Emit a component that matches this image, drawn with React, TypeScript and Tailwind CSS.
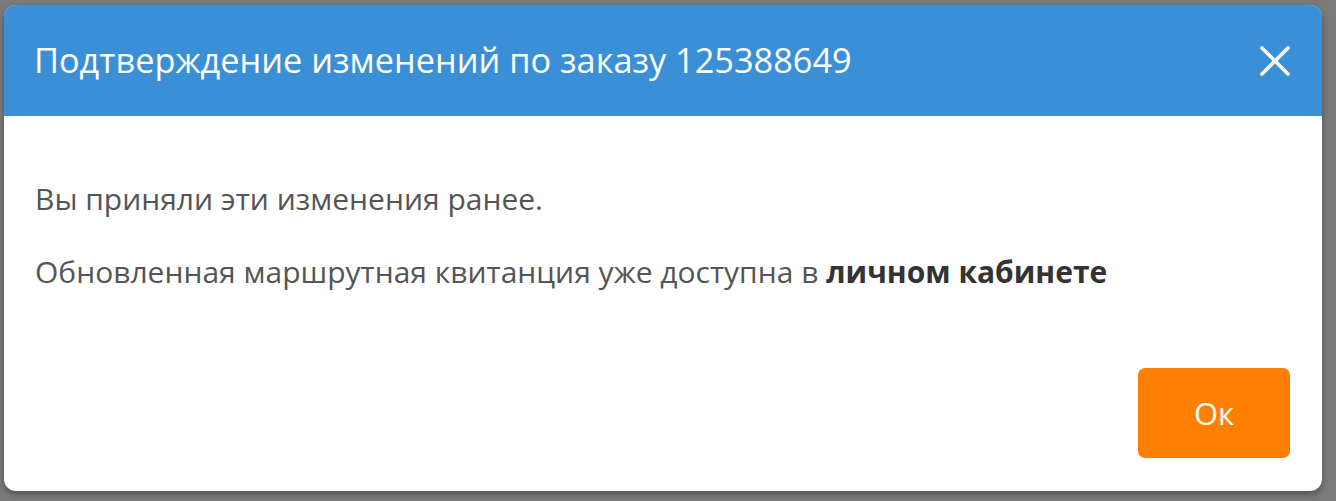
export default function App() {
  return (
    <div className="h-[501px] w-[1336px] overflow-hidden bg-[#7a7a7a] pl-[4px] pt-[5px]" style={{ fontFamily: '"Open Sans", "Noto Sans", sans-serif' }}>
      <div className="flex h-[486px] w-[1318px] flex-col overflow-hidden rounded-[12px] bg-white shadow-[0_3px_6px_rgba(0,0,0,0.35)]">
        <div className="flex h-[111px] shrink-0 items-center justify-between bg-[#3a8fd6] pl-[30px] pr-[31px]">
          <h1 className="text-[34.3px] leading-none text-white">Подтверждение изменений по заказу 125388649</h1>
          <button className="flex h-[32px] w-[32px] items-center justify-center text-white">
            <svg width="32" height="32" viewBox="0 0 32 32" fill="none" stroke="currentColor" strokeWidth="3.6" strokeLinecap="round">
              <path d="M3 3 L29 29 M29 3 L3 29" />
            </svg>
          </button>
        </div>
        <div className="flex-1 px-[31px] pt-[68px] text-[30px] leading-none text-[#555555]">
          <p>Вы приняли эти изменения ранее.</p>
          <p className="mt-[43px]">
            Обновленная маршрутная квитанция уже доступна в <b className="font-bold text-[#333333]">личном кабинете</b>
          </p>
        </div>
        <div className="flex justify-end pb-[33px] pr-[32px]">
          <button className="h-[90px] w-[152px] rounded-[7px] bg-[#ff7f00] text-[31px] text-white">Ок</button>
        </div>
      </div>
    </div>
  );
}
